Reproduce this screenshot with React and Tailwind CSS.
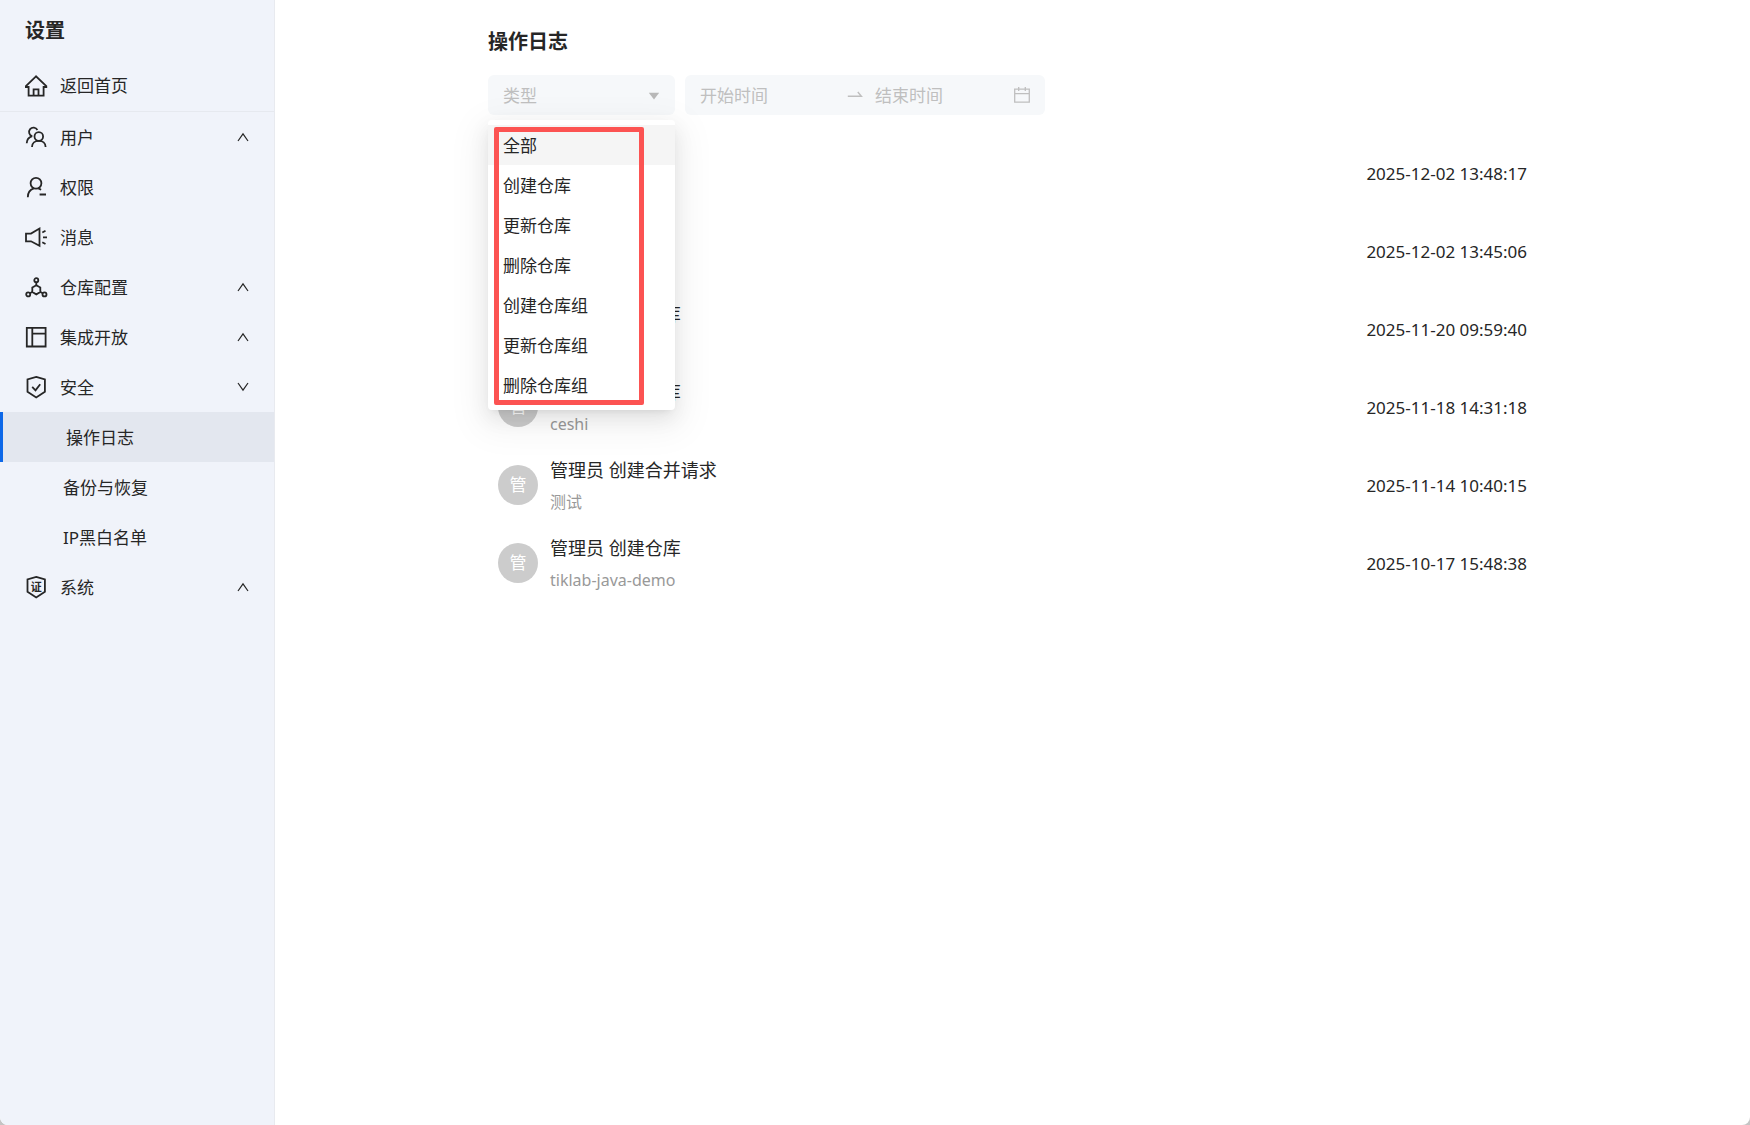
import React, { useState } from "react";

const Icon = ({ children }) => (
  <svg
    viewBox="0 0 24 24"
    className="h-6 w-6 shrink-0"
    fill="none"
    stroke="#262626"
    strokeWidth="1.8"
    aria-hidden="true"
  >
    {children}
  </svg>
);

const icons = {
  home: (
    <Icon>
      <path d="M12 2.3 1.9 12.2v.8h2.7v8.6h15V13h2.7v-.8Z" />
      <path d="M9.6 21.6v-6.3h4.9v6.3" />
    </Icon>
  ),
  user: (
    <Icon>
      <path d="M8.2 11.2A4.4 4.4 0 1 1 13.4 5" />
      <path d="M2.7 18.2c.2-3.2 2-5.9 5.5-7" />
      <circle cx="14.8" cy="11.5" r="4.3" />
      <path d="M8 22c0-3.8 3-6.2 6.8-6.2s6.8 2.4 6.8 6.2" />
    </Icon>
  ),
  permission: (
    <Icon>
      <circle cx="12" cy="8.3" r="5.4" />
      <path d="M3.8 22.2c0-4.4 2.4-7.6 5.9-8.8M14.3 13.4c1.2.3 1.9.8 2.8 1.4M15.6 19.5H22" />
    </Icon>
  ),
  message: (
    <Icon>
      <path d="M15.5 3.5v17.3L7 16.3H2V8.6h5Z" />
      <path d="m18.3 7.5 3.2-1.8M19 12.4h4M18.3 17.2l3.2 1.8" />
    </Icon>
  ),
  repository: (
    <Icon>
      <circle cx="12.3" cy="5.2" r="2" />
      <path d="M12.3 7.2v3M8.2 17l-2.3 1.3M16.4 17l2.3 1.3" />
      <path d="m12.3 10.2 4 2.3v4.6l-4 2.3-4-2.3v-4.6Z" />
      <circle cx="4.2" cy="19.4" r="2" />
      <circle cx="20.5" cy="19.4" r="2" />
    </Icon>
  ),
  open: (
    <Icon>
      <path d="M2.8 2.8h18.8v18.7H2.8ZM8.3 2.8v18.7M8.3 8.6h13.3" />
    </Icon>
  ),
  security: (
    <Icon>
      <path d="m12.2 1.9 8.7 2.5v12.3l-8.7 5.8-8.7-5.8V4.4Z" />
      <path d="m8.2 11.8 3.3 3.5 4.7-6.1" />
    </Icon>
  ),
  system: (
    <Icon>
      <path d="m12.2 1.9 8.7 2.5v12.3l-8.7 5.8-8.7-5.8V4.4Z" />
      <text
        x="12.2"
        y="15.8"
        fontSize="11"
        fontWeight="700"
        textAnchor="middle"
        fill="#262626"
        stroke="none"
      >
        证
      </text>
    </Icon>
  ),
};

const menus = [
  { key: "user", title: "用户", arrow: "up" },
  { key: "permission", title: "权限" },
  { key: "message", title: "消息" },
  { key: "repository", title: "仓库配置", arrow: "up" },
  { key: "open", title: "集成开放", arrow: "up" },
  {
    key: "security",
    title: "安全",
    arrow: "down",
    children: ["操作日志", "备份与恢复", "IP黑白名单"],
  },
  { key: "system", title: "系统", arrow: "up" },
];

const types = [
  "全部",
  "创建仓库",
  "更新仓库",
  "删除仓库",
  "创建仓库组",
  "更新仓库组",
  "删除仓库组",
];

const logs = [
  { title: "管理员", desc: "", time: "2025-12-02 13:48:17" },
  { title: "管理员", desc: "", time: "2025-12-02 13:45:06" },
  { title: "管理员 创建仓库", desc: "", time: "2025-11-20 09:59:40" },
  { title: "管理员 创建仓库", desc: "ceshi", time: "2025-11-18 14:31:18" },
  { title: "管理员 创建合并请求", desc: "测试", time: "2025-11-14 10:40:15" },
  { title: "管理员 创建仓库", desc: "tiklab-java-demo", time: "2025-10-17 15:48:38" },
];

const Arrow = ({ dir }) => (
  <svg
    viewBox="0 0 12 10"
    className="ml-auto h-[10px] w-3"
    fill="none"
    stroke="#262626"
    strokeWidth="1.2"
    aria-hidden="true"
  >
    <path d={dir === "up" ? "M1 9 6 1.8 11 9" : "M1 1 6 8.2 11 1"} />
  </svg>
);

const Sidebar = () => {
  const [active, setActive] = useState("操作日志");

  return (
    <aside className="w-[275px] shrink-0 rounded-bl-lg border-r border-[#e8eaef] bg-[#f0f3fa]">
      <h2 className="flex h-[61px] items-center pt-px pl-[25px] text-xl font-bold">设置</h2>
      <a
        href="#home"
        className="flex h-[51px] items-center gap-3 border-b border-[#e6e9ef] px-6"
      >
        {icons.home}
        返回首页
      </a>
      <nav>
        {menus.map((menu) => (
          <div key={menu.key}>
            <button
              type="button"
              className="flex h-[50px] w-full cursor-pointer items-center gap-3 pr-[25px] pl-6"
            >
              {icons[menu.key]}
              <span className="pt-0.5">{menu.title}</span>
              {menu.arrow && <Arrow dir={menu.arrow} />}
            </button>
            {menu.children?.map((name) => (
              <button
                key={name}
                type="button"
                onClick={() => setActive(name)}
                className={`flex h-[50px] w-full cursor-pointer items-center pt-0.5 pl-[63px] ${
                  active === name ? "border-l-3 border-[#0d68e8] bg-[#e3e7ef]" : ""
                }`}
              >
                {name}
              </button>
            ))}
          </div>
        ))}
      </nav>
    </aside>
  );
};

const TypeSelect = () => {
  const [type, setType] = useState("");

  return (
    <div className="relative w-[187px]">
      <select
        aria-label="类型"
        value={type}
        onChange={(e) => setType(e.target.value)}
        className="h-10 w-full appearance-none rounded-md bg-[#f6f8fa] px-[15px] pt-0.5 text-[#bfbfbf] outline-none"
      >
        <option value="">类型</option>
        {types.map((item) => (
          <option key={item}>{item}</option>
        ))}
      </select>
      <svg
        viewBox="0 0 12 8"
        className="pointer-events-none absolute top-[17px] right-[15px] h-2 w-3"
        fill="#b8b8b8"
        aria-hidden="true"
      >
        <path d="M.8.8h10.4L6 7.4Z" />
      </svg>
      <div className="absolute top-[45px] left-0 z-10 w-full rounded-sm bg-white py-[5px] shadow-[0_4px_8px_-5px_rgba(0,0,0,0.12),0_8px_20px_0_rgba(0,0,0,0.08),0_11px_35px_10px_rgba(0,0,0,0.05)]">
        <ul>
          {types.map((item, i) => (
            <li key={item}>
              <button
                type="button"
                onClick={() => setType(item)}
                className={`h-10 w-full cursor-pointer px-[15px] pt-0.5 text-left ${
                  i === 0 ? "bg-[#f5f5f5]" : ""
                }`}
              >
                {item}
              </button>
            </li>
          ))}
        </ul>
        <div className="pointer-events-none absolute top-[7px] bottom-[5px] left-[6px] w-[150px] rounded-xs border-5 border-[#fc5352]" />
      </div>
    </div>
  );
};

const DateRange = () => (
  <div className="flex h-10 w-[360px] items-center rounded-md bg-[#f6f8fa] px-[15px]">
    <input
      aria-label="开始时间"
      placeholder="开始时间"
      className="w-0 flex-1 pt-0.5 outline-none placeholder:text-[#bfbfbf]"
    />
    <svg
      viewBox="0 0 16 16"
      className="mr-3 ml-2 h-4 w-4"
      fill="none"
      stroke="#bfbfbf"
      strokeWidth="1.4"
      aria-hidden="true"
    >
      <path d="M.8 9.3h13.6L10.8 5" />
    </svg>
    <input
      aria-label="结束时间"
      placeholder="结束时间"
      className="w-0 flex-1 pt-0.5 outline-none placeholder:text-[#bfbfbf]"
    />
    <svg
      viewBox="0 0 16 16"
      className="h-4 w-4"
      fill="none"
      stroke="#bfbfbf"
      strokeWidth="1.3"
      aria-hidden="true"
    >
      <path d="M.7 2.2h14.6v13H.7ZM.7 6.7h14.6M4.7 0v4M11.3 0v4" />
    </svg>
  </div>
);

export default function App() {
  return (
    <div className="bg-[#c4c4c4]">
      <div className="flex min-h-screen rounded-b-lg bg-white font-['Noto_Sans','Noto_Sans_CJK_SC',sans-serif] text-[17px] text-[#262626]">
        <Sidebar />
        <main className="flex-1">
          <div className="mx-auto w-full max-w-[1049px] pt-6">
            <h1 className="h-[51px] text-xl leading-9 font-bold">操作日志</h1>
            <div className="flex gap-[10px]">
              <TypeSelect />
              <DateRange />
            </div>
            <ul className="mt-[19px]">
              {logs.map((log) => (
                <li key={log.time} className="flex h-[78px] items-center px-[10px]">
                  <span className="flex h-10 w-10 items-center justify-center rounded-full bg-[#cccccc] text-white">
                    管
                  </span>
                  <div className="ml-3 flex-1 pt-0.5">
                    <p className="h-8 text-lg leading-8">{log.title}</p>
                    <p className="h-8 text-base leading-8 text-[#999999]">{log.desc}</p>
                  </div>
                  <time className="pt-0.5">{log.time}</time>
                </li>
              ))}
            </ul>
          </div>
        </main>
      </div>
    </div>
  );
}
